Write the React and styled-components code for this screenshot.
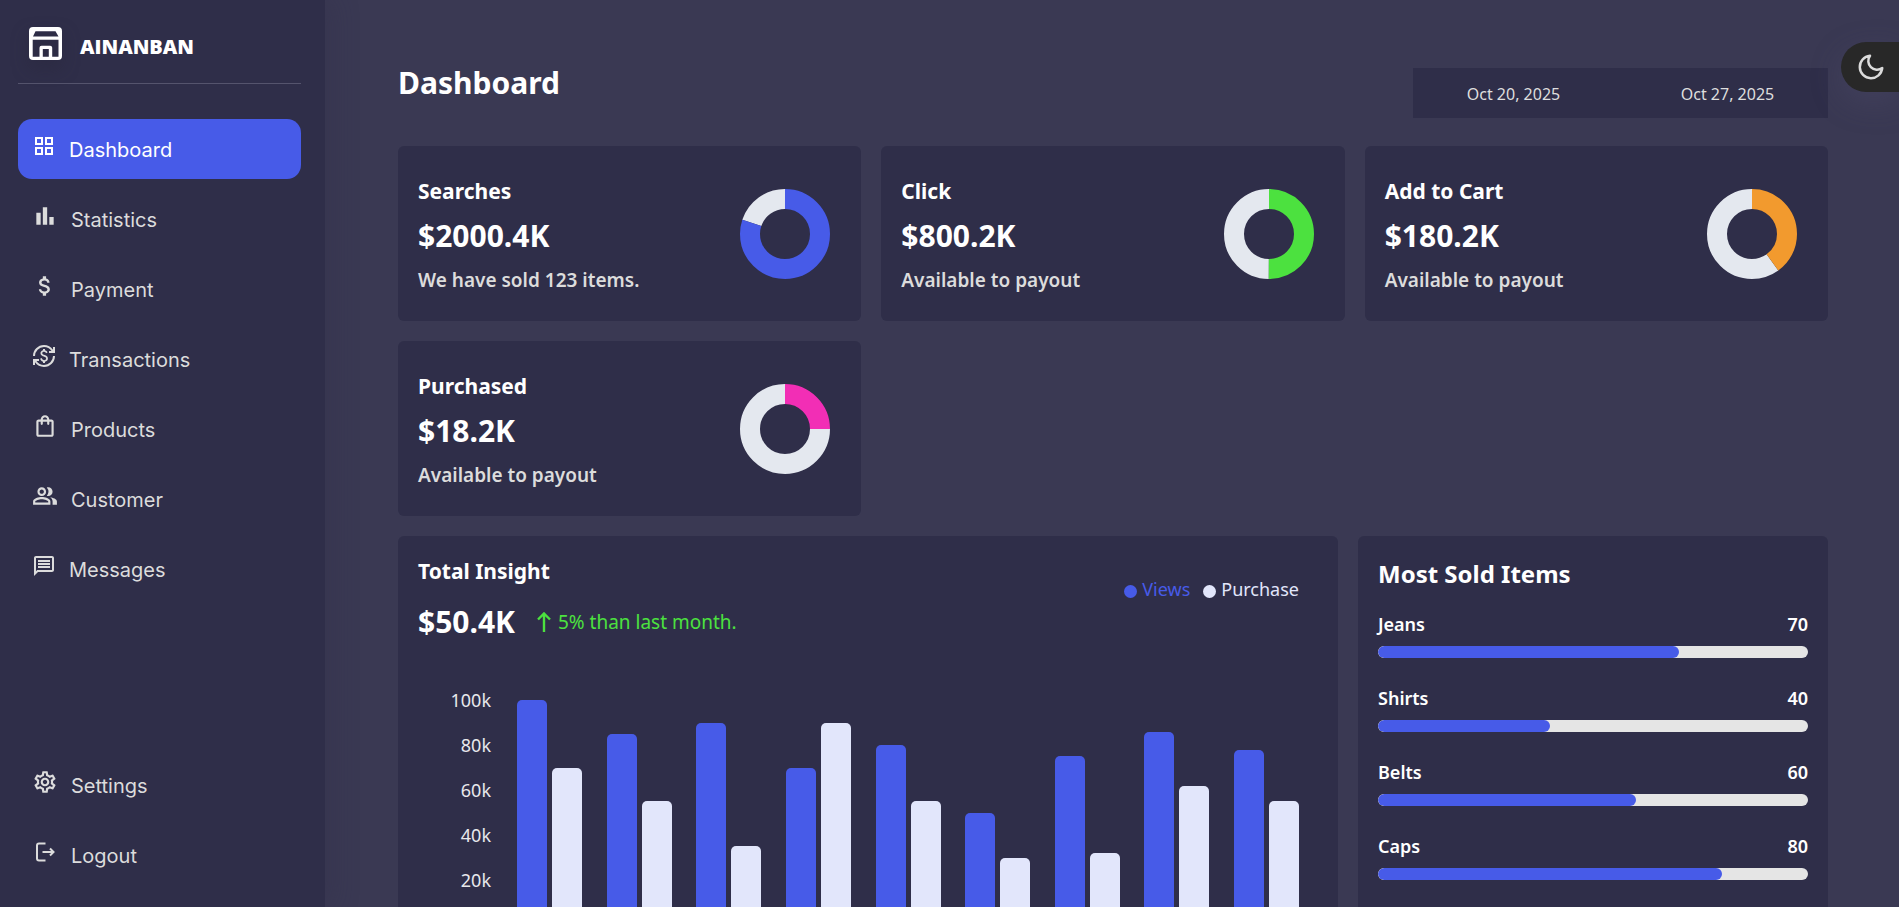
import React from "react";
import styled, { createGlobalStyle } from "styled-components";
import {
  MdBarChart, MdAttachMoney, MdCurrencyExchange, MdOutlineShoppingBag,
  MdOutlinePeopleAlt, MdOutlineMessage, MdOutlineGridView, MdOutlineSettings,
} from "react-icons/md";
import { FiMoon } from "react-icons/fi";

const GlobalStyle = createGlobalStyle`
  *, *::before, *::after { box-sizing: border-box; }
  body {
    margin: 0;
    background: #3a3953;
    color: #fff;
    font-family: "Noto Sans", "Open Sans", sans-serif;
  }
  h1, h2, h3, p, ul, ol { margin: 0; padding: 0; }
  ul, ol { list-style: none; }
`;

const Layout = styled.div`
  display: grid;
  grid-template-columns: 325px minmax(0, 1fr);
  height: 100vh;
`;

const Sidebar = styled.aside`
  display: flex;
  flex-direction: column;
  padding: 20px 24px 0 18px;
  background: #2f2e49;
  font-family: Inter, "Liberation Sans", sans-serif;
  box-shadow: 8px 0 24px rgba(50, 48, 72, 0.3);
`;

const Brand = styled.header`
  display: flex;
  align-items: center;
  gap: 18px;
  height: 64px;
  padding: 0 11px 16px;
  border-bottom: 1px solid #55546d;
`;

const BrandLogo = styled.svg`
  width: 33px;
  height: 33px;
  filter: drop-shadow(0 8px 8px rgba(38, 37, 56, 0.7));
`;

const BrandName = styled.span`
  padding-top: 6px;
  font: 800 20px/28px "Open Sans", sans-serif;
`;

const NavList = styled.ul`
  display: flex;
  flex-direction: column;
  gap: 10px;
  margin-top: ${(p) => (p.$bottom ? "auto" : "35px")};
  margin-bottom: ${(p) => (p.$bottom ? "22px" : "0")};
`;

const NavLink = styled.a`
  display: flex;
  align-items: center;
  gap: 13px;
  height: 60px;
  padding: 2px 14px 0;
  border-radius: 14px;
  background: ${(p) => (p.$active ? "#475be8" : "transparent")};
  color: ${(p) => (p.$active ? "#fff" : "#dcdcdc")};
  font-size: 20px;
  line-height: 30px;
  text-decoration: none;

  svg {
    flex: none;
    margin-bottom: 8px;
  }
`;

const Main = styled.main`
  overflow-y: auto;
  scrollbar-width: none;
  padding: 60px 71px 40px 73px;
`;

const TopBar = styled.header`
  display: flex;
  justify-content: space-between;
  height: 86px;
`;

const PageTitle = styled.h1`
  font-size: 30px;
  line-height: 46px;
  font-weight: 700;
`;

const DateRange = styled.div`
  display: grid;
  grid-template-columns: 1fr 1fr;
  gap: 13px;
  align-self: flex-start;
  width: 415px;
  height: 50px;
  margin-top: 8px;
  background: #2f2e49;
`;

const DateButton = styled.button`
  border: 0;
  padding: 2px 0 0;
  background: none;
  color: #dedede;
  font: 400 16px/24px "Noto Sans", sans-serif;
`;

const CardGrid = styled.section`
  display: grid;
  grid-template-columns: repeat(3, minmax(0, 1fr));
  gap: 20px;
`;

const Card = styled.article`
  background: #2f2e49;
  border-radius: 6px;
  padding: 20px;
`;

const StatCard = styled(Card)`
  display: flex;
  align-items: center;
  justify-content: space-between;
  height: 175px;
  padding: 0 30px 0 20px;
`;

const CardTitle = styled.h2`
  font-size: 21px;
  line-height: 30px;
  font-weight: 700;
`;

const Amount = styled.p`
  font-size: 30px;
  line-height: 44px;
  font-weight: 700;
`;

const StatText = styled.div`
  display: flex;
  flex-direction: column;
  gap: 8px;
  padding-top: 2px;
`;

const StatNote = styled.p`
  color: #dcdcdc;
  font-size: 19px;
  line-height: 28px;
  font-weight: 600;
`;

const Donut = styled.svg`
  width: 92px;
  height: 92px;
`;

const Panels = styled.section`
  display: grid;
  grid-template-columns: minmax(0, 2fr) minmax(0, 1fr);
  gap: 20px;
  margin-top: 20px;
`;

const InsightHead = styled.header`
  display: flex;
  justify-content: space-between;
`;

const InsightTotal = styled.div`
  display: flex;
  align-items: center;
  gap: 22px;
  margin-top: 14px;
`;

const Growth = styled.p`
  display: flex;
  align-items: center;
  gap: 7px;
  color: #4ce13f;
  font-size: 19px;
  line-height: 28px;
`;

const Legend = styled.ul`
  display: flex;
  gap: 13px;
  padding: 19px 19px 0 0;
`;

const LegendItem = styled.li`
  display: flex;
  align-items: center;
  gap: 5px;
  height: 28px;
  color: ${(p) => p.$color};
  font-size: 18px;
  line-height: 28px;

  &::before {
    content: "";
    width: 13px;
    height: 13px;
    margin-top: 4px;
    border-radius: 50%;
    background: ${(p) => p.$color};
  }
`;

const Chart = styled.div`
  display: flex;
  gap: 26px;
  margin-top: 56px;
  padding-right: 19px;
`;

const Axis = styled.ol`
  display: flex;
  flex-direction: column;
  gap: 19px;
  width: 73px;
  margin-top: -13px;
  text-align: right;
  color: #e8e8ec;
  font-size: 18px;
  line-height: 26px;
`;

const Bars = styled.div`
  display: flex;
  flex: 1;
  justify-content: space-between;
  height: 225px;
`;

const BarPair = styled.div`
  display: flex;
  align-items: flex-end;
  gap: 5px;
`;

const Bar = styled.div`
  width: 30px;
  border-radius: 5px 5px 0 0;
  background: ${(p) => p.$color};
`;

const SoldTitle = styled.h2`
  font-size: 24px;
  line-height: 36px;
  font-weight: 700;
`;

const SoldList = styled.ul`
  display: flex;
  flex-direction: column;
  gap: 26px;
  margin-top: 18px;
`;

const SoldRow = styled.div`
  display: flex;
  justify-content: space-between;
  font-size: 18px;
  line-height: 28px;
  font-weight: 600;
`;

const Track = styled.div`
  height: 12px;
  margin-top: 8px;
  border-radius: 6px;
  background: #e5e5e5;
  overflow: hidden;
`;

const Fill = styled.div`
  height: 100%;
  border-radius: 6px;
  background: #475be8;
`;

const ThemeToggle = styled.button`
  position: fixed;
  top: 42px;
  right: 0;
  display: flex;
  align-items: center;
  width: 58px;
  height: 50px;
  padding: 0 0 0 15px;
  border: 0;
  border-radius: 25px 0 0 25px;
  background: #282828;
  color: #dcdcdc;
  box-shadow: 0 10px 30px rgba(80, 78, 110, 0.35);
`;

const LogoutIcon = () => (
  <svg width="26" height="26" viewBox="0 0 26 26" fill="none" stroke="currentColor" strokeWidth="2" aria-hidden="true">
    <path d="M13.500 4.500H7A2 2 0 0 0 5 6.500V19.500A2 2 0 0 0 7 21.500H13.500M10.500 13H21M18 9.500L21.500 13L18 16.500" />
  </svg>
);

const GrowthArrow = () => (
  <svg width="14" height="20" viewBox="0 0 14 20" fill="none" stroke="currentColor" strokeWidth="2.4" aria-hidden="true">
    <path d="M7 20V2M1 7.500L7 1.500L13 7.500" />
  </svg>
);

const StoreLogo = () => (
  <BrandLogo viewBox="0 0 33 33" aria-hidden="true">
    <path
      fill="#fff"
      fillRule="evenodd"
      d="M4 0H29A4 4 0 0 1 33 4V29A4 4 0 0 1 29 33H4A4 4 0 0 1 0 29V4A4 4 0 0 1 4 0ZM6.500 4.300H26.500L29.500 9.500H4ZM3.700 12.700H29.500V29.700H23.200V20.500A2 2 0 0 0 21.200 18.700H12.500A2 2 0 0 0 10.500 20.700V29.700H3.700ZM13.800 22H19.800V29.700H13.800Z"
    />
  </BrandLogo>
);

const nav = [
  { label: "Dashboard", icon: <MdOutlineGridView size={24} />, active: true },
  { label: "Statistics", icon: <MdBarChart size={26} /> },
  { label: "Payment", icon: <MdAttachMoney size={26} /> },
  { label: "Transactions", icon: <MdCurrencyExchange size={24} /> },
  { label: "Products", icon: <MdOutlineShoppingBag size={26} /> },
  { label: "Customer", icon: <MdOutlinePeopleAlt size={26} /> },
  { label: "Messages", icon: <MdOutlineMessage size={24} /> },
];

const bottomNav = [
  { label: "Settings", icon: <MdOutlineSettings size={26} /> },
  { label: "Logout", icon: <LogoutIcon /> },
];

const stats = [
  { title: "Searches", amount: "$2000.4K", note: "We have sold 123 items.", value: 80, color: "#475be8" },
  { title: "Click", amount: "$800.2K", note: "Available to payout", value: 50, color: "#4ce13f" },
  { title: "Add to Cart", amount: "$180.2K", note: "Available to payout", value: 40, color: "#f29a2e" },
  { title: "Purchased", amount: "$18.2K", note: "Available to payout", value: 25, color: "#f22eb5" },
];

const series = [
  [100, 70], [85, 55], [90, 35], [70, 90], [80, 55], [50, 30], [75, 32], [86, 62], [78, 55],
];

const sold = [
  ["Jeans", 70], ["Shirts", 40], ["Belts", 60], ["Caps", 80],
];

function NavItems({ items, bottom }) {
  return (
    <NavList $bottom={bottom}>
      {items.map((item) => (
        <li key={item.label}>
          <NavLink href="#" $active={item.active}>
            {item.icon}
            {item.label}
          </NavLink>
        </li>
      ))}
    </NavList>
  );
}

function DonutChart({ value, color }) {
  const radius = 35;
  const length = 2 * Math.PI * radius;
  const filled = (length * value) / 100;
  return (
    <Donut viewBox="0 0 92 92" aria-hidden="true">
      <g fill="none" strokeWidth="20" transform="rotate(-90 46 46)">
        <circle
          cx="46" cy="46" r={radius} stroke="#e4e8ef"
          strokeDasharray={`${length - filled} ${length}`}
          strokeDashoffset={-filled}
        />
        <circle cx="46" cy="46" r={radius} stroke={color} strokeDasharray={`${filled} ${length}`} />
      </g>
    </Donut>
  );
}

export default function App() {
  return (
    <>
      <GlobalStyle />
      <Layout>
        <Sidebar>
          <Brand>
            <StoreLogo />
            <BrandName>AINANBAN</BrandName>
          </Brand>
          <nav>
            <NavItems items={nav} />
          </nav>
          <NavItems items={bottomNav} bottom />
        </Sidebar>
        <Main>
          <TopBar>
            <PageTitle>Dashboard</PageTitle>
            <DateRange>
              <DateButton type="button">Oct 20, 2025</DateButton>
              <DateButton type="button">Oct 27, 2025</DateButton>
            </DateRange>
          </TopBar>
          <CardGrid>
            {stats.map((s) => (
              <StatCard key={s.title}>
                <StatText>
                  <CardTitle>{s.title}</CardTitle>
                  <Amount>{s.amount}</Amount>
                  <StatNote>{s.note}</StatNote>
                </StatText>
                <DonutChart value={s.value} color={s.color} />
              </StatCard>
            ))}
          </CardGrid>
          <Panels>
            <Card>
              <InsightHead>
                <div>
                  <CardTitle>Total Insight</CardTitle>
                  <InsightTotal>
                    <Amount>$50.4K</Amount>
                    <Growth><GrowthArrow />5% than last month.</Growth>
                  </InsightTotal>
                </div>
                <Legend>
                  <LegendItem $color="#475be8">Views</LegendItem>
                  <LegendItem $color="#e2e6fb">Purchase</LegendItem>
                </Legend>
              </InsightHead>
              <Chart>
                <Axis>
                  {[100, 80, 60, 40, 20].map((n) => <li key={n}>{n}k</li>)}
                </Axis>
                <Bars>
                  {series.map(([views, purchase], i) => (
                    <BarPair key={i}>
                      <Bar $color="#475be8" style={{ height: `${views}%` }} />
                      <Bar $color="#e2e6fb" style={{ height: `${purchase}%` }} />
                    </BarPair>
                  ))}
                </Bars>
              </Chart>
            </Card>
            <Card>
              <SoldTitle>Most Sold Items</SoldTitle>
              <SoldList>
                {sold.map(([name, count]) => (
                  <li key={name}>
                    <SoldRow><span>{name}</span><span>{count}</span></SoldRow>
                    <Track><Fill style={{ width: `${count}%` }} /></Track>
                  </li>
                ))}
              </SoldList>
            </Card>
          </Panels>
        </Main>
      </Layout>
      <ThemeToggle type="button" aria-label="Switch theme">
        <FiMoon size={30} />
      </ThemeToggle>
    </>
  );
}
